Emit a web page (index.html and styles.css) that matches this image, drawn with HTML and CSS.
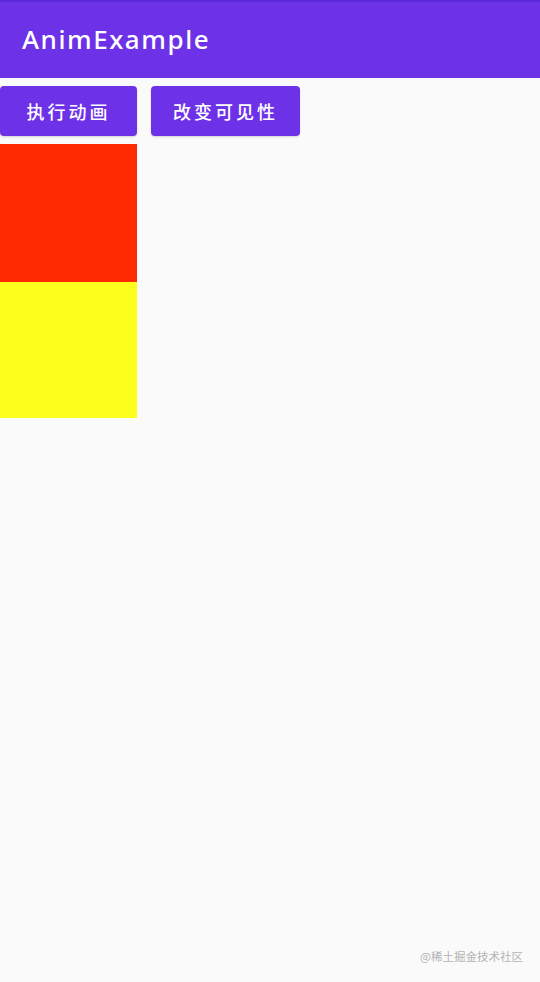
FILE: index.html
```html
<!DOCTYPE html>
<html lang="zh">
<head>
<meta charset="utf-8">
<link rel="stylesheet" href="styles.css">
</head>
<body>
<div class="app">
  <header class="topbar"><span class="title">AnimExample</span></header>
  <div class="buttons">
    <div class="btn btn-a">执行动画</div>
    <div class="btn btn-b">改变可见性</div>
  </div>
  <div class="box red"></div>
  <div class="box yellow"></div>
  <div class="watermark">@稀土掘金技术社区</div>
</div>
</body>
</html>
```
FILE: styles.css
```css
html, body { margin: 0; padding: 0; }
body { background: #fafafa; font-family: "Noto Sans", "Noto Sans CJK SC", sans-serif; }
.app { position: relative; width: 540px; height: 982px; background: #fafafa; }
.topbar {
  height: 78px;
  box-sizing: border-box;
  background: #6d32e8;
  border-top: 2px solid #5a28d6;
  display: flex;
  align-items: center;
  padding-left: 22px;
}
.title {
  color: #fff;
  font-size: 26px;
  font-weight: 500;
  font-family: "Noto Sans", sans-serif;
  letter-spacing: 1.55px;
  margin-top: -2px;
}
.buttons { display: flex; gap: 14px; padding-top: 8px; height: 50px; }
.btn {
  background: #6d32e8;
  color: #fff;
  border-radius: 4px;
  height: 50px;
  display: flex;
  align-items: center;
  justify-content: center;
  font-size: 18px;
  font-weight: 500;
  letter-spacing: 3px;
  font-family: "Noto Sans CJK SC", sans-serif;
  box-shadow: 0 1px 2px rgba(0,0,0,0.15);
}
.btn-a { width: 137px; }
.btn-b { width: 149px; }
.box { width: 137px; }
.red { background: #ff2a00; height: 138px; margin-top: 8px; }
.yellow { background: #ffff1e; height: 136px; }
.watermark {
  position: absolute;
  right: 17px;
  bottom: 18px;
  color: #b3b3b3;
  font-size: 11.5px;
  font-family: "Noto Sans CJK SC", sans-serif;
}
```
